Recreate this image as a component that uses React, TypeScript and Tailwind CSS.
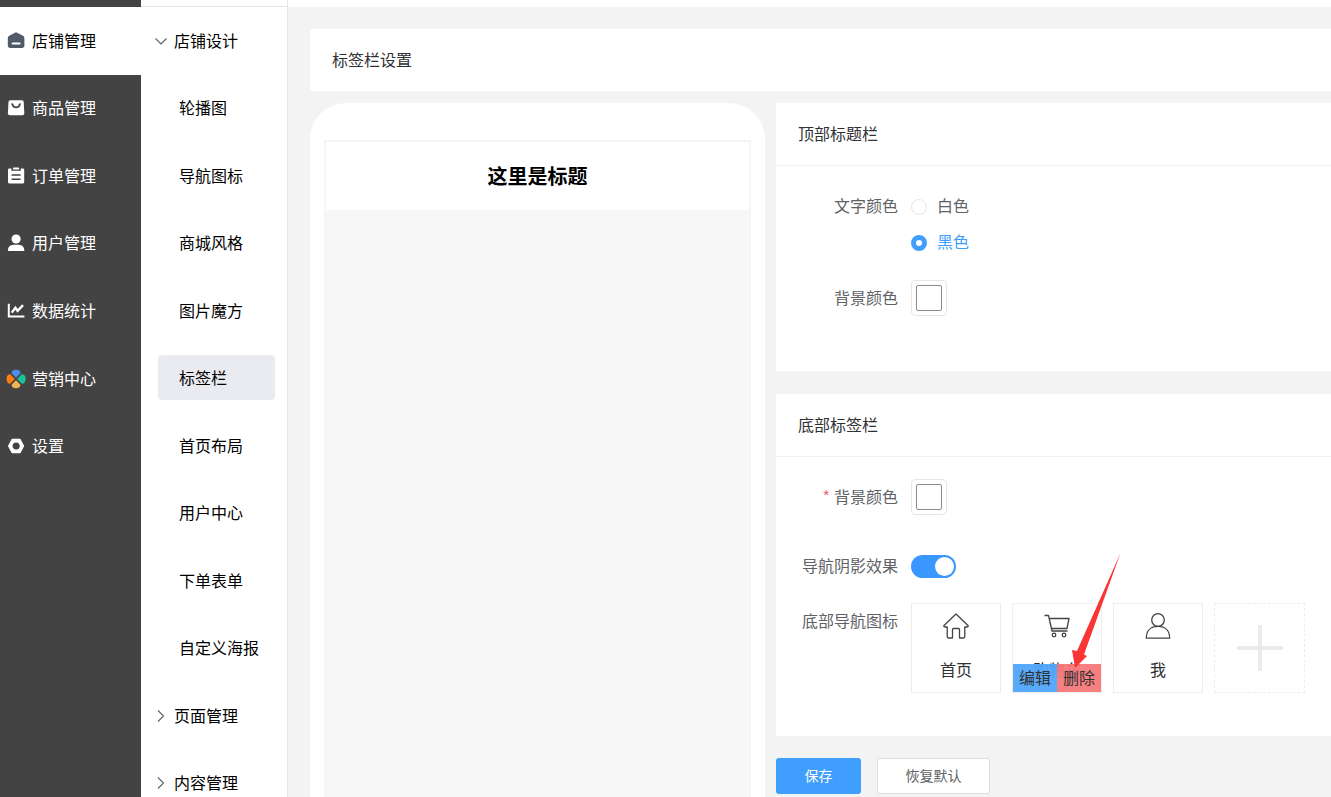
import { useState } from 'react'
import type { ReactNode } from 'react'
import clsx from 'clsx'

const mainMenu: { name: string; icon: ReactNode }[] = [
  {
    name: '店铺管理',
    icon: (
      <>
        <path d="M9 0.2 15.6 3.6Q17.4 4.4 17.4 6.2V13.6Q17.4 16 14.8 16H3.4Q0.8 16 0.8 13.6V6.2Q0.8 4.4 2.6 3.6Z" fill="#4f5b66" />
        <rect x="4.6" y="10.4" width="9" height="2.2" rx="1" fill="#fff" />
      </>
    ),
  },
  {
    name: '商品管理',
    icon: (
      <>
        <path d="M3.2 1.2H15Q16.6 1.2 16.7 2.8L17.3 14.2Q17.3 16.2 15.3 16.2H3Q0.9 16.2 0.9 14.2L1.5 2.8Q1.6 1.2 3.2 1.2Z" fill="#fff" />
        <path d="M5.2 5Q6 8.4 9.1 8.4T13 5" fill="none" stroke="#434343" strokeWidth="1.7" strokeLinecap="round" />
      </>
    ),
  },
  {
    name: '订单管理',
    icon: (
      <>
        <path d="M2.4 1.4H4.4V3.8H13.8V1.4H15.8Q17.2 1.4 17.2 2.8V15Q17.2 16.6 15.6 16.6H2.6Q1 16.6 1 15V2.8Q1 1.4 2.4 1.4Z" fill="#fff" />
        <rect x="6" y="0.6" width="6.2" height="1.8" rx="0.6" fill="#fff" />
        <path d="M4.6 8H13.6M4.6 12.2H13.6" stroke="#434343" strokeWidth="1.6" />
      </>
    ),
  },
  {
    name: '用户管理',
    icon: (
      <>
        <circle cx="9.1" cy="5" r="4.6" fill="#fff" />
        <path d="M0.8 17Q1 10.8 6.6 10.8H11.6Q17.2 10.8 17.4 17Z" fill="#fff" />
      </>
    ),
  },
  {
    name: '数据统计',
    icon: (
      <>
        <path d="M1.8 1.8V14.6H17.4" fill="none" stroke="#fff" strokeWidth="2" />
        <path d="M4.8 10.6 8.4 5.8 10.6 8.8 16 3.2" fill="none" stroke="#fff" strokeWidth="2.4" />
      </>
    ),
  },
  {
    name: '营销中心',
    icon: (
      <>
        <path d="M9 7.8 4.6 3.2Q4.6 -0.2 9 -0.2T13.4 3.2Z" fill="#4a8fee" />
        <path d="M7.8 9 3.2 13.8Q-0.4 13.8 -0.4 9T3.2 4.2Z" fill="#ff7d0c" />
        <path d="M10.2 9 14.8 4.2Q18.6 4.2 18.6 9T14.8 13.8Z" fill="#16c596" />
        <path d="M9 10.2 13.4 14.8Q13.4 18.2 9 18.2T4.6 14.8Z" fill="#f0b35c" />
      </>
    ),
  },
  {
    name: '设置',
    icon: (
      <path d="M5.2 2.4H13L16.6 9 13 15.6H5.2L1.6 9ZM9.1 4.8A4.2 4.2 0 1 0 9.1 13.2 4.2 4.2 0 1 0 9.1 4.8Z" fill="#fff" fillRule="evenodd" stroke="#fff" strokeWidth="1.2" strokeLinejoin="round" />
    ),
  },
]

const designPages = ['轮播图', '导航图标', '商城风格', '图片魔方', '标签栏', '首页布局', '用户中心', '下单表单', '自定义海报']

function Arrow({ open }: { open?: boolean }) {
  return (
    <svg viewBox="0 0 12 12" className="w-3 h-3 shrink-0" fill="none" stroke="#606266" strokeWidth="1.1">
      <path d={open ? 'M0.5 3.5 6 9 11.5 3.5' : 'M3 0.5 8.5 6 3 11.5'} />
    </svg>
  )
}

function MenuGroup({ name, open }: { name: string; open?: boolean }) {
  return (
    <button aria-expanded={!!open} className="flex items-center gap-[7px] pl-[14px] text-left">
      <Arrow open={open} />
      <span className="pb-[2px]">{name}</span>
    </button>
  )
}

function Panel({ title, className, children }: { title: string; className?: string; children: ReactNode }) {
  return (
    <section className={clsx('bg-white', className)}>
      <h2 className="h-[63px] px-[22px] pb-[2px] flex items-center border-b border-[#f2f2f2] text-[#303133]">{title}</h2>
      {children}
    </section>
  )
}

function ColorPicker({ id }: { id: string }) {
  return (
    <button id={id} className="w-9 h-9 p-1 bg-white border border-[#e6e6e6] rounded">
      <span className="block w-[26px] h-[26px] border border-[#8c8c8c] rounded-[2px]" />
    </button>
  )
}

function Tile({ name, children }: { name: string; children: ReactNode }) {
  return (
    <div className="relative w-[90px] h-[90px] border border-[#eee] flex flex-col items-center text-[#303133]">
      <svg viewBox="0 0 28 28" className="w-7 h-7 mt-2 shrink-0" fill="none" stroke="#444" strokeWidth="1.3" strokeLinejoin="round">
        {children}
      </svg>
      <span className="mt-[17px] leading-6">{name}</span>
      {name === '购物车' && (
        <>
          <div className="absolute inset-x-0 bottom-0 h-7 flex">
            <button className="flex-1 pb-[2px] bg-[#4fa5fc]/95">编辑</button>
            <button className="flex-1 pb-[2px] bg-[#f57878]/95">删除</button>
          </div>
          <svg viewBox="0 0 50 116" className="absolute left-[59px] top-[-51px] w-[50px] h-[116px] pointer-events-none">
            <path d="M48.5 0 5 98 0 97 3 115 15 103 12 101.500Z" fill="#fb3434" />
          </svg>
        </>
      )}
    </div>
  )
}

const labelStyle = 'w-[122px] shrink-0 pb-[2px] text-right leading-6'

export default function App() {
  const [textColor, setTextColor] = useState('黑色')
  const [shadow, setShadow] = useState(true)

  return (
    <div className="h-screen overflow-hidden flex bg-[#f3f3f3] text-base text-[#606266] font-['Noto_Sans_CJK_SC',sans-serif]">
      {/* Main menu */}
      <nav className="w-[141px] shrink-0 pt-[7px] bg-[#434343]">
        <div className="h-[473px] grid grid-rows-7">
          {mainMenu.map((item, i) => (
            <button
              key={item.name}
              className={clsx('flex items-center gap-[7px] pl-[7px] text-left', i === 0 ? 'bg-white text-black' : 'text-white')}
            >
              <svg viewBox="0 0 18 18" className="w-[18px] h-[18px] shrink-0 overflow-visible">
                {item.icon}
              </svg>
              <span className="pb-[2px]">{item.name}</span>
            </button>
          ))}
        </div>
      </nav>

      {/* Sub menu */}
      <nav className="w-[147px] shrink-0 bg-white border-r border-[#e6e6e6] text-black">
        <div className="h-[7px] border-b border-[#e6e6e6]" />
        <div className="h-[810px] grid grid-rows-12">
          <MenuGroup name="店铺设计" open />
          {designPages.map((page) => (
            <div key={page} className="flex items-center pl-[17px] pr-3 pb-[2px]">
              <button className={clsx('w-full h-[45px] pl-[21px] rounded text-left', page === '标签栏' && 'bg-[#eaebf0]')}>
                {page}
              </button>
            </div>
          ))}
          <MenuGroup name="页面管理" />
          <MenuGroup name="内容管理" />
        </div>
      </nav>

      <main className="flex-1 min-w-0 flex flex-col">
        <div className="h-[7px] shrink-0 bg-white" />
        <div className="flex-1 min-h-0 flex flex-col pt-[22px] pl-[22px]">
          <h1 className="h-[62px] shrink-0 px-[22px] pb-[2px] flex items-center bg-white text-[#303133]">标签栏设置</h1>

          <div className="flex-1 min-h-0 flex gap-[11px] mt-3">
            {/* Phone preview */}
            <div className="w-[455px] shrink-0 px-[14px] pt-[37px] bg-white rounded-t-[36px] flex flex-col">
              <div className="flex-1 border-2 border-b-0 border-[#f5f5f5] bg-[#f7f7f7]">
                <div className="h-[68px] flex items-center justify-center bg-white text-xl font-bold text-black">
                  这里是标题
                </div>
              </div>
            </div>

            {/* Settings */}
            <div className="flex-1 min-w-0">
              <Panel title="顶部标题栏" className="h-[268px]">
                <div className="flex gap-[13px] pt-[27px]">
                  <span id="text-color" className={labelStyle}>文字颜色</span>
                  <div role="radiogroup" aria-labelledby="text-color" className="flex flex-col gap-3">
                    {['白色', '黑色'].map((color) => (
                      <label key={color} className={clsx('flex items-center gap-[10px] leading-6', textColor === color && 'text-[#409eff]')}>
                        <input
                          type="radio"
                          name="textColor"
                          checked={textColor === color}
                          onChange={() => setTextColor(color)}
                          className="appearance-none w-4 h-4 mt-[3px] rounded-full bg-white border border-[#e4e7ed] checked:border-[5px] checked:border-[#409eff]"
                        />
                        {color}
                      </label>
                    ))}
                  </div>
                </div>
                <div className="flex items-center gap-[13px] mt-[27px]">
                  <label htmlFor="top-bg" className={labelStyle}>背景颜色</label>
                  <ColorPicker id="top-bg" />
                </div>
              </Panel>

              <Panel title="底部标签栏" className="h-[342px] mt-[23px]">
                <div className="flex items-center gap-[13px] pt-[22px]">
                  <label htmlFor="bottom-bg" className={labelStyle}>
                    <span className="mr-1 text-[#f56c6c]">*</span>背景颜色
                  </label>
                  <ColorPicker id="bottom-bg" />
                </div>
                <div className="flex items-center gap-[13px] mt-[38px]">
                  <label htmlFor="shadow" className={labelStyle}>导航阴影效果</label>
                  <input
                    id="shadow"
                    type="checkbox"
                    role="switch"
                    checked={shadow}
                    onChange={(e) => setShadow(e.target.checked)}
                    className="appearance-none w-[45px] h-[23px] p-[2px] rounded-full flex bg-[#dcdfe6] checked:bg-[#3a97ff] checked:justify-end before:w-[19px] before:h-[19px] before:rounded-full before:bg-white"
                  />
                </div>
                <div className="flex gap-[13px] mt-6">
                  <span className={clsx(labelStyle, 'pt-[5px]')}>底部导航图标</span>
                  <div className="flex gap-[11px]">
                    <Tile name="首页">
                      <path d="M14 2 26 13.5Q26.5 15 25 15H22.8V24.5Q22.8 26 21.5 26H17.5V17.5Q17.5 16.5 16.5 16.5H11.5Q10.5 16.5 10.5 17.5V26H6.5Q5.2 26 5.2 24.5V15H3Q1.5 15 2 13.5Z" />
                    </Tile>
                    <Tile name="购物车">
                      <path d="M1.5 3.5H5.5L9 19H24.5M6.2 6.5H26L24 16.5H8.5" />
                      <circle cx="11" cy="23" r="1.8" />
                      <circle cx="21" cy="23" r="1.8" />
                    </Tile>
                    <Tile name="我">
                      <circle cx="14" cy="8" r="6.3" />
                      <path d="M2.3 26.2C2.3 18.5 7 14.3 14 14.3S25.7 18.5 25.7 26.2Z" />
                    </Tile>
                    <button aria-label="添加" className="w-[91px] h-[90px] border border-dashed border-[#eee] flex items-center justify-center">
                      <svg viewBox="0 0 46 46" className="w-[46px] h-[46px]" stroke="#ebebeb" strokeWidth="4">
                        <path d="M23 0V46M0 23H46" />
                      </svg>
                    </button>
                  </div>
                </div>
              </Panel>

              <div className="flex gap-4 mt-[22px] text-sm">
                <button className="w-[85px] h-9 pb-[2px] rounded-[3px] bg-[#409eff] text-white">保存</button>
                <button className="w-[113px] h-9 pb-[2px] rounded-[3px] bg-white border border-[#dcdfe6]">恢复默认</button>
              </div>
            </div>
          </div>
        </div>
      </main>
    </div>
  )
}
